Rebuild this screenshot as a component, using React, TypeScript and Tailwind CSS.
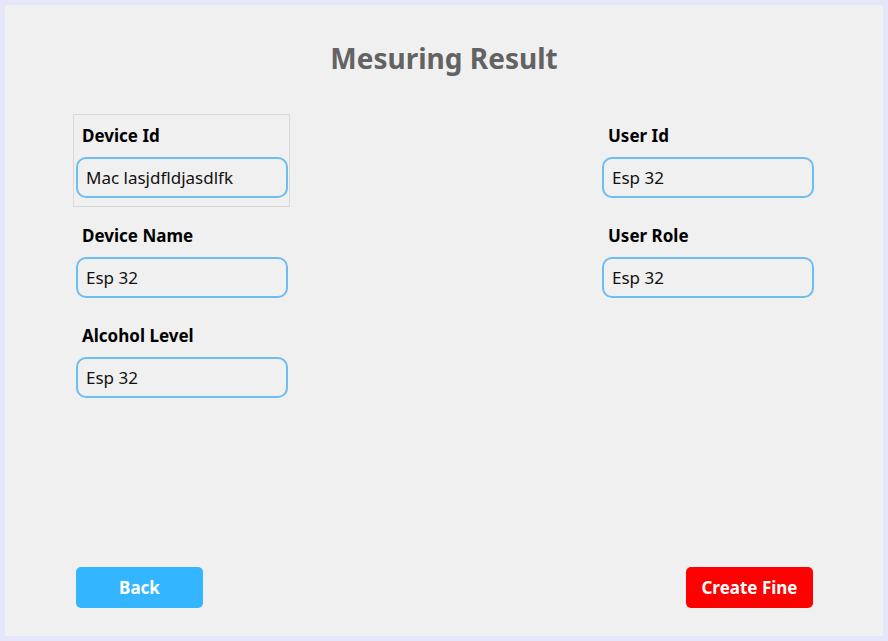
import { useState } from "react";

type TField = {
	label: string;
	value: string;
	focused?: boolean;
};

const leftFields: TField[] = [
	{ label: "Device Id", value: "Mac lasjdfldjasdlfk", focused: true },
	{ label: "Device Name", value: "Esp 32" },
	{ label: "Alcohol Level", value: "Esp 32" },
];

const rightFields: TField[] = [
	{ label: "User Id", value: "Esp 32" },
	{ label: "User Role", value: "Esp 32" },
];

const Field = ({ label, value, focused }: TField) => {
	const [text, setText] = useState(value);
	return (
		<div
			className={`w-[217px] h-[93px] pl-[2px] pr-[1px] pt-[9px] border ${
				focused ? "border-[#d9d9d9]" : "border-transparent"
			}`}>
			<label className="block pl-[6px] text-[17px] leading-[24px] font-bold text-black">
				{label}
			</label>
			<input
				value={text}
				onChange={(e) => setText(e.target.value)}
				className="mt-[9px] w-[212px] h-[41px] px-[8px] rounded-[10px] border-2 border-[#6cbdf2] bg-transparent text-[17px] text-[#111] outline-none"
			/>
		</div>
	);
};

const App = () => {
	return (
		<div
			className="w-[888px] h-[641px] border-[5px] border-[#e6e6fa] bg-[#f0f0f0] flex flex-col"
			style={{ fontFamily: '"Noto Sans", "Open Sans", sans-serif' }}>
			<h1 className="pt-[34px] text-center text-[28px] leading-[38px] font-bold text-[#636363]">
				Mesuring Result
			</h1>

			<div className="mt-[37px] flex justify-between pl-[68px] pr-[67px]">
				<div className="flex flex-col gap-[7px]">
					{leftFields.map((f) => (
						<Field key={f.label} {...f} />
					))}
				</div>
				<div className="flex flex-col gap-[7px]">
					{rightFields.map((f) => (
						<Field key={f.label} {...f} />
					))}
				</div>
			</div>

			<div className="mt-auto flex justify-between pl-[71px] pr-[70px] pb-[28px]">
				<button className="w-[127px] h-[41px] rounded-[5px] bg-[#33b6ff] text-white text-[17px] font-bold">
					Back
				</button>
				<button className="w-[127px] h-[41px] rounded-[5px] bg-[#ff0000] text-white text-[17px] font-bold">
					Create Fine
				</button>
			</div>
		</div>
	);
};

export default App;
